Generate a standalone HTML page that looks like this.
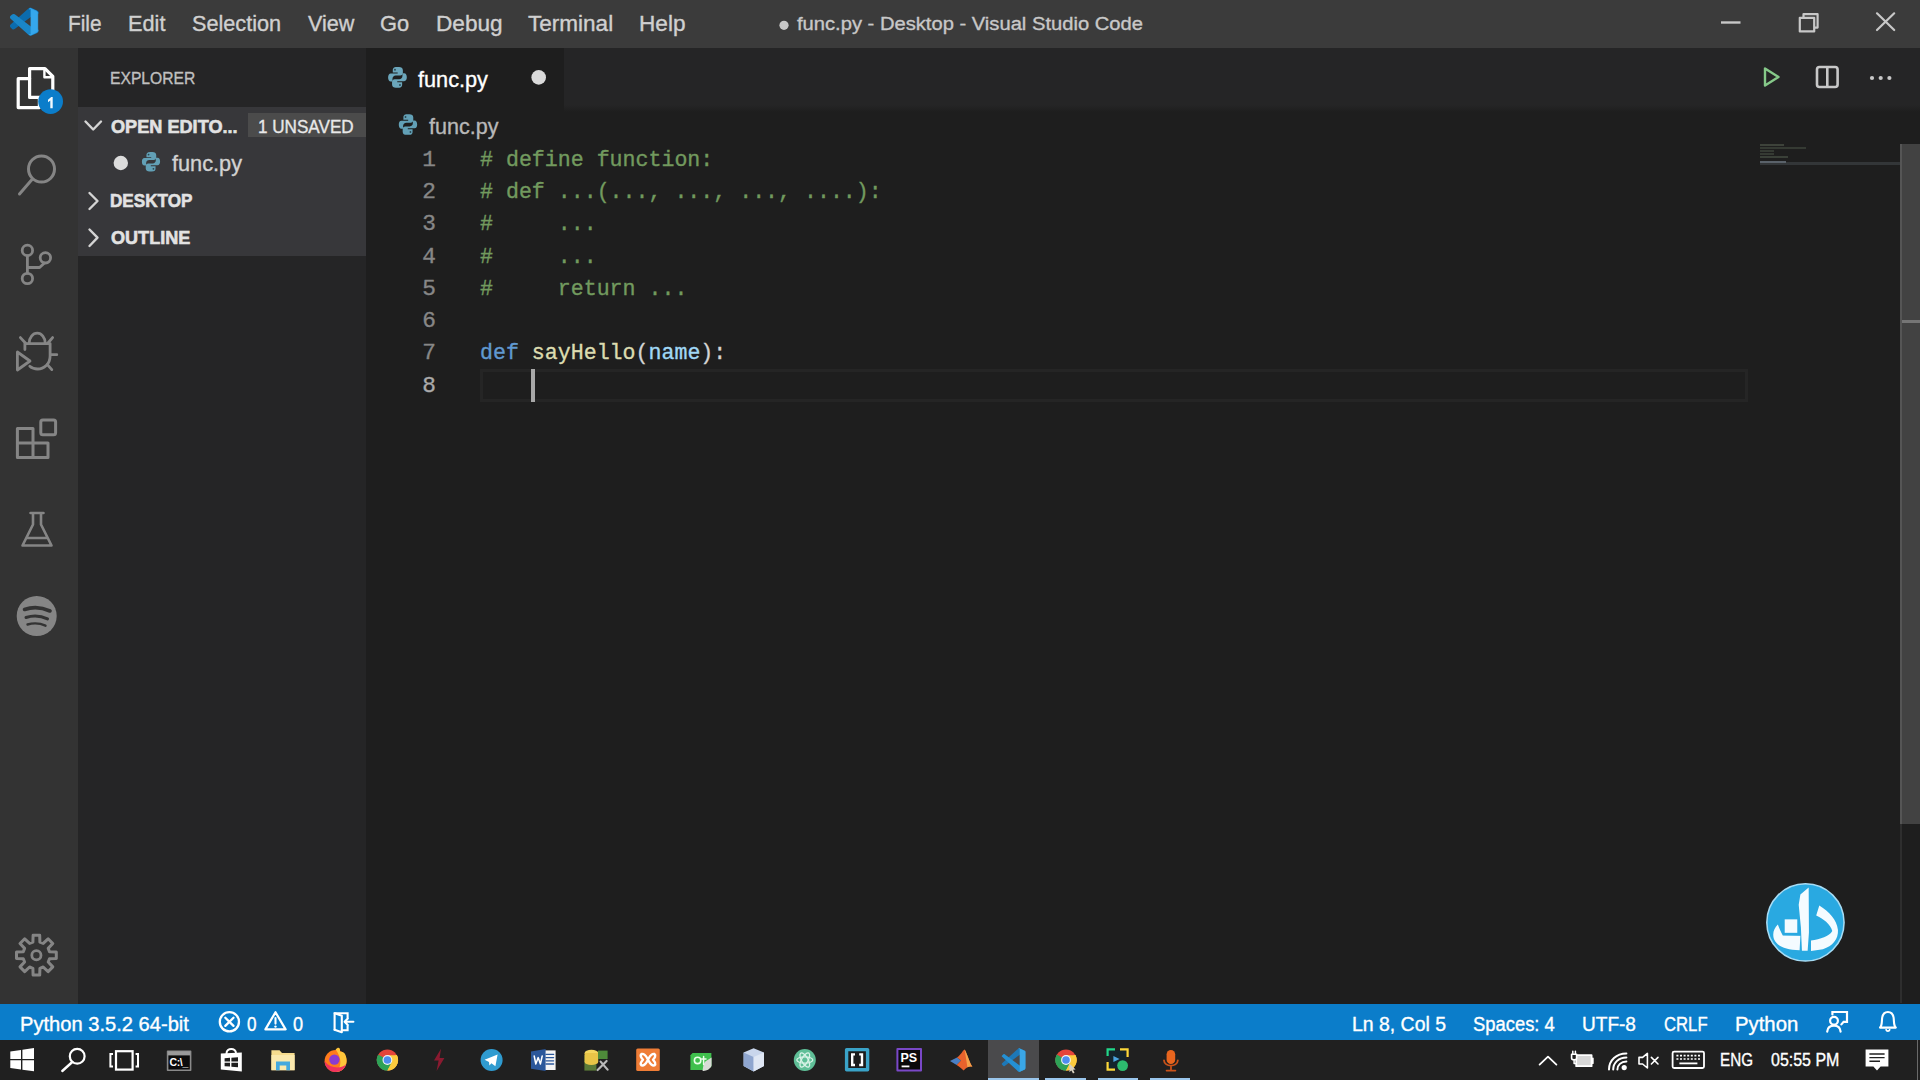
<!DOCTYPE html>
<html><head><meta charset="utf-8">
<style>
*{box-sizing:border-box;margin:0;padding:0}
html,body{width:1920px;height:1080px;overflow:hidden;background:#1e1e1e;font-family:"Liberation Sans",sans-serif;color:#ccc}
.b{position:absolute}
.t{position:absolute;white-space:pre;line-height:1;transform-origin:0 50%;-webkit-text-stroke:0.35px currentColor}
.code{font-family:"Liberation Mono",monospace;font-size:21.6px;left:480px;color:#d4d4d4;transform:none}
.ln{font-family:"Liberation Mono",monospace;font-size:22.8px;left:422.2px;color:#878787;transform:none;margin-top:-0.8px}
.c{color:#729a5e}.k{color:#6099d0}.f{color:#dcdcb0}.v{color:#a0d8f6}
svg{position:absolute;overflow:visible}
</style></head><body>
<div class="b" style="left:0;top:0;width:1920px;height:48px;background:#3b3b3b"></div>
<div class="b" style="left:0;top:48px;width:78px;height:956px;background:#333333"></div>
<div class="b" style="left:78px;top:48px;width:288px;height:956px;background:#252526"></div>
<div class="b" style="left:78px;top:107px;width:288px;height:149px;background:#37373a"></div>
<div class="b" style="left:248px;top:113px;width:118px;height:24px;background:#4b4b4b"></div>
<div class="b" style="left:366px;top:48px;width:1554px;height:57px;background:#252526"></div>
<div class="b" style="left:564px;top:105px;width:1356px;height:7px;background:linear-gradient(#252526,#1e1e1e)"></div>
<div class="b" style="left:366px;top:48px;width:198px;height:64px;background:#1e1e1e"></div>
<div class="b" style="left:366px;top:112px;width:1554px;height:891px;background:#1e1e1e"></div>
<!-- scrollbar -->
<div class="b" style="left:1900px;top:144px;width:20px;height:680px;background:#424242;border-left:2px solid #555"></div>
<div class="b" style="left:1900px;top:824px;width:2px;height:179px;background:#2e2e2e"></div>
<div class="b" style="left:1902px;top:320px;width:18px;height:3px;background:#757575"></div>
<!-- minimap -->
<div class="b" style="left:1760px;top:162px;width:140px;height:3px;background:#333638"></div>
<div class="b" style="left:1760px;top:144px;width:24px;height:2px;background:#3d423a"></div>
<div class="b" style="left:1760px;top:147px;width:46px;height:2px;background:#353a33"></div>
<div class="b" style="left:1760px;top:150px;width:14px;height:2px;background:#353a33"></div>
<div class="b" style="left:1760px;top:153px;width:14px;height:2px;background:#353a33"></div>
<div class="b" style="left:1760px;top:156px;width:28px;height:2px;background:#3a4038"></div>
<div class="b" style="left:1760px;top:161px;width:26px;height:2px;background:#5a626a"></div>
<!-- current line -->
<div class="b" style="left:480px;top:369px;width:1268px;height:33px;border:3px solid #252525"></div>
<div class="b" style="left:531px;top:369px;width:4px;height:33px;background:#a8a8a8"></div>
<!-- status & taskbar -->
<div class="b" style="left:0;top:1003.5px;width:1920px;height:36.5px;background:#0b7dca"></div>
<div class="b" style="left:0;top:1040px;width:1920px;height:40px;background:#202020"></div>

<!-- texts -->
<div class="t" style="left:67.64px;top:13.00px;font-size:21.6px;font-weight:400;color:#d0d0d0;transform:scaleX(0.9649)">File</div>
<div class="t" style="left:127.59px;top:13.00px;font-size:21.6px;font-weight:400;color:#d0d0d0;transform:scaleX(1.0053)">Edit</div>
<div class="t" style="left:192.40px;top:13.00px;font-size:21.6px;font-weight:400;color:#d0d0d0;transform:scaleX(1.0032)">Selection</div>
<div class="t" style="left:307.50px;top:13.00px;font-size:21.6px;font-weight:400;color:#d0d0d0;transform:scaleX(0.9996)">View</div>
<div class="t" style="left:379.59px;top:13.00px;font-size:21.6px;font-weight:400;color:#d0d0d0;transform:scaleX(1.0109)">Go</div>
<div class="t" style="left:435.75px;top:13.00px;font-size:21.6px;font-weight:400;color:#d0d0d0;transform:scaleX(1.0467)">Debug</div>
<div class="t" style="left:528.00px;top:13.00px;font-size:21.6px;font-weight:400;color:#d0d0d0;transform:scaleX(1.0433)">Terminal</div>
<div class="t" style="left:638.95px;top:13.00px;font-size:21.6px;font-weight:400;color:#d0d0d0;transform:scaleX(1.0461)">Help</div>
<div class="t" style="left:796.50px;top:14.40px;font-size:19.2px;font-weight:400;color:#c8c8c8;transform:scaleX(1.0507)">func.py - Desktop - Visual Studio Code</div>
<div class="t" style="left:110.39px;top:70.40px;font-size:17.2px;font-weight:400;color:#c0c0c0;transform:scaleX(0.9111)">EXPLORER</div>
<div class="t" style="left:110.60px;top:116.50px;font-size:19px;font-weight:700;color:#e2e2e2;transform:scaleX(0.9544);-webkit-text-stroke:0.6px currentColor">OPEN EDITO...</div>
<div class="t" style="left:258.46px;top:117.60px;font-size:18.2px;font-weight:400;color:#e8e8e8;transform:scaleX(0.9403)">1 UNSAVED</div>
<div class="t" style="left:171.90px;top:152.60px;font-size:22px;font-weight:400;color:#d2d2d2;transform:scaleX(0.9869)">func.py</div>
<div class="t" style="left:109.70px;top:191.40px;font-size:19px;font-weight:700;color:#e2e2e2;transform:scaleX(0.9006);-webkit-text-stroke:0.6px currentColor">DESKTOP</div>
<div class="t" style="left:110.60px;top:228.30px;font-size:19px;font-weight:700;color:#e2e2e2;transform:scaleX(0.9515);-webkit-text-stroke:0.6px currentColor">OUTLINE</div>
<div class="t" style="left:418.10px;top:69.20px;font-size:22.2px;font-weight:400;color:#ffffff;transform:scaleX(0.9773)">func.py</div>
<div class="t" style="left:429.40px;top:116.10px;font-size:22px;font-weight:400;color:#b8b8b8;transform:scaleX(0.9784)">func.py</div>
<div class="t" style="left:20.46px;top:1014.60px;font-size:19.4px;font-weight:400;color:#ffffff;transform:scaleX(1.0376)">Python 3.5.2 64-bit</div>
<div class="t" style="left:247.00px;top:1014.60px;font-size:19.4px;font-weight:400;color:#ffffff;transform:scaleX(0.8818)">0</div>
<div class="t" style="left:292.70px;top:1014.60px;font-size:19.4px;font-weight:400;color:#ffffff;transform:scaleX(0.9364)">0</div>
<div class="t" style="left:1352.40px;top:1014.60px;font-size:19.4px;font-weight:400;color:#ffffff;transform:scaleX(1.0022)">Ln 8, Col 5</div>
<div class="t" style="left:1473.00px;top:1014.60px;font-size:19.4px;font-weight:400;color:#ffffff;transform:scaleX(0.9485)">Spaces: 4</div>
<div class="t" style="left:1582.42px;top:1014.60px;font-size:19.4px;font-weight:400;color:#ffffff;transform:scaleX(0.9821)">UTF-8</div>
<div class="t" style="left:1663.80px;top:1014.60px;font-size:19.4px;font-weight:400;color:#ffffff;transform:scaleX(0.8604)">CRLF</div>
<div class="t" style="left:1734.55px;top:1014.60px;font-size:19.4px;font-weight:400;color:#ffffff;transform:scaleX(1.0481)">Python</div>
<div class="t" style="left:1719.94px;top:1052.00px;font-size:17.8px;font-weight:400;color:#ffffff;transform:scaleX(0.8556)">ENG</div>
<div class="t" style="left:1770.80px;top:1052.00px;font-size:17.8px;font-weight:400;color:#ffffff;transform:scaleX(0.8991)">05:55 PM</div>
<!-- code -->
<div class="t ln" style="top:150px">1</div>
<div class="t ln" style="top:182px">2</div>
<div class="t ln" style="top:214px">3</div>
<div class="t ln" style="top:247px">4</div>
<div class="t ln" style="top:279px">5</div>
<div class="t ln" style="top:311px">6</div>
<div class="t ln" style="top:343px">7</div>
<div class="t ln" style="top:376px;color:#ababab">8</div>
<div class="t code c" style="top:150px"># define function:</div>
<div class="t code c" style="top:182px"># def ...(..., ..., ..., ....):</div>
<div class="t code c" style="top:214px">#     ...</div>
<div class="t code c" style="top:247px">#     ...</div>
<div class="t code c" style="top:279px">#     return ...</div>
<div class="t code" style="top:343px"><span class="k">def</span> <span class="f">sayHello</span>(<span class="v">name</span>):</div>

<!-- activity bar icons -->
<svg width="78" height="1003" style="left:0;top:0" fill="none" stroke-linejoin="round" stroke-linecap="round">
 <!-- files (active) -->
 <path d="M29.6 78.7 H18.2 V107.6 H39.4 V99" stroke="#fff" stroke-width="3.2"/>
 <path d="M29.6 68.6 H45 L52.8 76.4 V97.4 H29.6 Z" stroke="#fff" stroke-width="3.2"/>
 <path d="M44.4 69 V77.2 H52.4" stroke="#fff" stroke-width="2.4"/>
 <circle cx="50.6" cy="101.6" r="12.4" fill="#0b7dca" stroke="none"/>
 <path d="M48 99.8 L51.2 96.9 H52.7 V108.2 H50.3 V100.4 L48 102.3 Z" fill="#f2faff" stroke="none"/>
 <!-- search -->
 <circle cx="41.5" cy="169" r="13" stroke="#858585" stroke-width="3"/>
 <path d="M32 179.5 L19.5 194" stroke="#858585" stroke-width="3"/>
 <!-- scm -->
 <circle cx="27.4" cy="250.4" r="5.2" stroke="#858585" stroke-width="2.8"/>
 <circle cx="45.4" cy="257.8" r="5.2" stroke="#858585" stroke-width="2.8"/>
 <circle cx="27.4" cy="278.5" r="5.2" stroke="#858585" stroke-width="2.8"/>
 <path d="M27.4 256 V273 M44.2 263.2 L39.6 267.5 H28.2" stroke="#858585" stroke-width="2.8"/>
 <!-- debug -->
 <path d="M17.4 352 V370 L30 361 Z" stroke="#858585" stroke-width="2.8"/>
 <path d="M29.2 343 a8 9.8 0 0 1 16 0" stroke="#858585" stroke-width="2.8"/>
 <path d="M24.9 349.5 V343.6 H50.1 V356 C50.1 364 44 369 37.5 369 C34.4 369 31.6 367.8 29.8 366.2" stroke="#858585" stroke-width="2.8"/>
 <path d="M20.4 337.6 L25.4 343 M52.6 337.6 L48 343 M50.6 354.7 H56.8 M47.4 364.6 L51.8 369.6" stroke="#858585" stroke-width="2.8"/>
 <!-- extensions -->
 <path d="M17.4 428.6 H33 V443 H48 V457.4 H17.4 Z M17.4 443 H33 V457.4" stroke="#858585" stroke-width="3"/>
 <rect x="40.8" y="419.9" width="14.8" height="14.8" rx="2" stroke="#858585" stroke-width="3"/>
 <!-- flask -->
 <path d="M30.5 513 H43.5 M33 513.5 V524.5 L22.5 545.5 H51.5 L41 524.5 V513.5 M26.5 538 H47.5" stroke="#858585" stroke-width="2.6"/>
 <!-- spotify -->
 <circle cx="36.7" cy="616" r="20" fill="#858585" stroke="none"/>
 <path d="M24.5 609.5 q12.5 -4.5 25.5 1.5" stroke="#333" stroke-width="3.6"/>
 <path d="M26 617.5 q11 -3.6 21.5 1.4" stroke="#333" stroke-width="3"/>
 <path d="M27.5 624.5 q9.5 -2.8 18 1.2" stroke="#333" stroke-width="2.4"/>
 <!-- gear -->
 <path d="M33.1 935.3 L39.7 935.3 L39.9 942.1 L43.2 943.4 L48.1 938.8 L52.8 943.5 L48.2 948.4 L49.5 951.7 L56.3 951.9 L56.3 958.5 L49.5 958.7 L48.2 962.0 L52.8 966.9 L48.1 971.6 L43.2 967.0 L39.9 968.3 L39.7 975.1 L33.1 975.1 L32.9 968.3 L29.6 967.0 L24.7 971.6 L20.0 966.9 L24.6 962.0 L23.3 958.7 L16.5 958.5 L16.5 951.9 L23.3 951.7 L24.6 948.4 L20.0 943.5 L24.7 938.8 L29.6 943.4 L32.9 942.1Z" stroke="#858585" stroke-width="3"/>
 <circle cx="36.4" cy="955.2" r="4.6" stroke="#858585" stroke-width="2.8"/>
</svg>

<!-- misc icons -->
<svg width="1920" height="1080" style="left:0;top:0" fill="none" stroke-linejoin="round" stroke-linecap="round">
 <!-- vscode logo -->
 <g transform="translate(10.9,8.5) scale(0.268,0.264)" stroke-linejoin="round">
  <path d="M96.46 10.8L75.86 0.88C73.47 -0.27 70.62 0.21 68.75 2.08L1.3 63.58C-0.52 65.24 -0.51 68.09 1.3 69.75L6.81 74.75C8.3 76.1 10.53 76.2 12.13 74.99L93.36 13.37C96.09 11.3 100 13.25 100 16.67V16.43C100 14.03 98.62 11.84 96.46 10.8Z" fill="#0c6cae" stroke="#0c6cae" stroke-width="7"/>
  <path d="M96.46 89.2L75.86 99.12C73.47 100.27 70.62 99.79 68.75 97.92L1.3 36.42C-0.52 34.76 -0.51 31.91 1.3 30.25L6.81 25.25C8.3 23.9 10.53 23.8 12.13 25.01L93.36 86.63C96.09 88.7 100 86.75 100 83.33V83.57C100 85.97 98.62 88.16 96.46 89.2Z" fill="#1a86c8" stroke="#1a86c8" stroke-width="7"/>
  <path d="M75.86 99.13C73.47 100.27 70.62 99.79 68.75 97.92C71.06 100.22 75 98.59 75 95.33V4.67C75 1.41 71.06 -0.22 68.75 2.08C70.62 0.21 73.47 -0.27 75.86 0.87L96.46 10.78C98.62 11.82 100 14.01 100 16.41V83.59C100 85.99 98.62 88.18 96.46 89.22L75.86 99.13Z" fill="#35a7ec" stroke="#35a7ec" stroke-width="3"/>
 </g>
 <!-- title bullet -->
 <circle cx="784" cy="25.3" r="4.6" fill="#c8c8c8"/>
 <!-- window controls -->
 <path d="M1721 22.5 H1740.5" stroke="#c8c8c8" stroke-width="2.4" stroke-linecap="butt"/>
 <rect x="1799.8" y="17.8" width="14.4" height="13.6" stroke="#c8c8c8" stroke-width="2.2"/>
 <path d="M1803.5 17 V14.2 H1817.6 V27.6 H1815" stroke="#c8c8c8" stroke-width="2.2"/>
 <path d="M1877 13.3 L1894.2 30 M1894.2 13.3 L1877 30" stroke="#c8c8c8" stroke-width="2.2"/>
 <!-- editor actions -->
 <path d="M1765 68.5 V85.5 L1778.5 77 Z" stroke="#86c989" stroke-width="2.4"/>
 <rect x="1817" y="67" width="20.6" height="20" rx="2.5" stroke="#c8c8c8" stroke-width="2.6"/>
 <path d="M1827.3 67.5 V86.5" stroke="#c8c8c8" stroke-width="2.6"/>
 <circle cx="1872" cy="78" r="2.1" fill="#c8c8c8"/><circle cx="1880.7" cy="78" r="2.1" fill="#c8c8c8"/><circle cx="1889.4" cy="78" r="2.1" fill="#c8c8c8"/>
 <!-- tab python + dot -->
 <g transform="translate(388.1,66.9) scale(1.04,1.09)" fill="#6ba6bb"><path d="M9.2 0 h-1 c-3 0 -3.7 1.4 -3.7 3 v2.2 h4.7 v0.9 h-6.6 c-1.8 0 -2.6 1.6 -2.6 3.6 s0.8 3.7 2.6 3.7 h1.6 v-2.4 c0 -1.9 1.4 -3.1 3.1 -3.1 h4.4 c1.5 0 2.5 -1.1 2.5 -2.6 v-2.3 c0 -2 -1.6 -3 -3.7 -3 z"/><path d="M9.2 0 h-1 c-3 0 -3.7 1.4 -3.7 3 v2.2 h4.7 v0.9 h-6.6 c-1.8 0 -2.6 1.6 -2.6 3.6 s0.8 3.7 2.6 3.7 h1.6 v-2.4 c0 -1.9 1.4 -3.1 3.1 -3.1 h4.4 c1.5 0 2.5 -1.1 2.5 -2.6 v-2.3 c0 -2 -1.6 -3 -3.7 -3 z" transform="rotate(180 9 9.6)"/><circle cx="6.6" cy="2.6" r="0.9" fill="#2a4650"/><circle cx="11.4" cy="16.6" r="0.9" fill="#2a4650"/></g>
 <circle cx="538.7" cy="77.4" r="7.3" fill="#dadada"/>
 <!-- breadcrumb python -->
 <g transform="translate(398.8,114.3) scale(1.02,1.07)" fill="#62a0b6"><path d="M9.2 0 h-1 c-3 0 -3.7 1.4 -3.7 3 v2.2 h4.7 v0.9 h-6.6 c-1.8 0 -2.6 1.6 -2.6 3.6 s0.8 3.7 2.6 3.7 h1.6 v-2.4 c0 -1.9 1.4 -3.1 3.1 -3.1 h4.4 c1.5 0 2.5 -1.1 2.5 -2.6 v-2.3 c0 -2 -1.6 -3 -3.7 -3 z"/><path d="M9.2 0 h-1 c-3 0 -3.7 1.4 -3.7 3 v2.2 h4.7 v0.9 h-6.6 c-1.8 0 -2.6 1.6 -2.6 3.6 s0.8 3.7 2.6 3.7 h1.6 v-2.4 c0 -1.9 1.4 -3.1 3.1 -3.1 h4.4 c1.5 0 2.5 -1.1 2.5 -2.6 v-2.3 c0 -2 -1.6 -3 -3.7 -3 z" transform="rotate(180 9 9.6)"/><circle cx="6.6" cy="2.6" r="0.9" fill="#2a4650"/><circle cx="11.4" cy="16.6" r="0.9" fill="#2a4650"/></g>
 <!-- sidebar row -->
 <circle cx="120.8" cy="163" r="7.2" fill="#dcdcdc"/>
 <g transform="translate(141.9,151.9) scale(1.01,1.02)" fill="#62a0b6"><path d="M9.2 0 h-1 c-3 0 -3.7 1.4 -3.7 3 v2.2 h4.7 v0.9 h-6.6 c-1.8 0 -2.6 1.6 -2.6 3.6 s0.8 3.7 2.6 3.7 h1.6 v-2.4 c0 -1.9 1.4 -3.1 3.1 -3.1 h4.4 c1.5 0 2.5 -1.1 2.5 -2.6 v-2.3 c0 -2 -1.6 -3 -3.7 -3 z"/><path d="M9.2 0 h-1 c-3 0 -3.7 1.4 -3.7 3 v2.2 h4.7 v0.9 h-6.6 c-1.8 0 -2.6 1.6 -2.6 3.6 s0.8 3.7 2.6 3.7 h1.6 v-2.4 c0 -1.9 1.4 -3.1 3.1 -3.1 h4.4 c1.5 0 2.5 -1.1 2.5 -2.6 v-2.3 c0 -2 -1.6 -3 -3.7 -3 z" transform="rotate(180 9 9.6)"/><circle cx="6.6" cy="2.6" r="0.9" fill="#2a4650"/><circle cx="11.4" cy="16.6" r="0.9" fill="#2a4650"/></g>
 <!-- chevrons -->
 <path d="M85.5 121.5 L93.2 129.5 L101 121.5" stroke="#d4d4d4" stroke-width="2.4"/>
 <path d="M89.5 193 L97.5 201 L89.5 209" stroke="#d4d4d4" stroke-width="2.4"/>
 <path d="M89.5 229.5 L97.5 237.7 L89.5 246" stroke="#d4d4d4" stroke-width="2.4"/>
 <!-- status: error / warning / door -->
 <circle cx="229.4" cy="1021.8" r="9.6" stroke="#fff" stroke-width="2.3"/>
 <path d="M225.3 1017.7 L233.5 1025.9 M233.5 1017.7 L225.3 1025.9" stroke="#fff" stroke-width="2.3"/>
 <path d="M275.5 1012.2 L285.6 1029.4 H265.4 Z" stroke="#fff" stroke-width="2.2"/>
 <path d="M275.5 1018 V1023.6" stroke="#fff" stroke-width="2.1"/><circle cx="275.5" cy="1026.6" r="1.2" fill="#fff"/>
 <path d="M347.6 1017.6 V1013.2 H334.6 V1029.8 M342 1030.2 H347.6 V1026" stroke="#fff" stroke-width="2.1" stroke-linejoin="miter"/>
 <path d="M334.8 1013.3 L341.8 1015.8 V1032.2 L334.6 1029.8" stroke="#fff" stroke-width="2.1"/>
 <path d="M353.4 1021.8 H345 M347.8 1018.6 L344.6 1021.8 L347.8 1025" stroke="#fff" stroke-width="2.1"/>
 <!-- status: feedback / bell -->
 <path d="M1832.4 1014.5 V1012 H1847 V1021.8 H1843.6 L1841.4 1024.4" stroke="#fff" stroke-width="2.2" stroke-linejoin="miter"/>
 <circle cx="1834" cy="1020.7" r="3.9" stroke="#fff" stroke-width="2.2"/>
 <path d="M1827.2 1031.6 C1827.6 1027.4 1830 1025.6 1834 1025.6 C1838 1025.6 1840.2 1027.4 1840.6 1031.6" stroke="#fff" stroke-width="2.2"/>
 <path d="M1880 1027.6 C1882.4 1025.4 1881.6 1021 1882.2 1017.6 C1882.9 1013.6 1885.2 1012 1887.9 1012 C1890.6 1012 1892.9 1013.6 1893.6 1017.6 C1894.2 1021 1893.4 1025.4 1895.8 1027.6 Z" stroke="#fff" stroke-width="2.1"/>
 <path d="M1886.1 1029.8 a1.9 1.9 0 0 0 3.6 0" stroke="#fff" stroke-width="1.8"/>
</svg>

<!-- taskbar -->
<div class="b" style="left:988px;top:1040px;width:51px;height:40px;background:#4a4a4c"></div>
<div class="b" style="left:988px;top:1078px;width:51px;height:2px;background:#9ac6ec"></div>
<div class="b" style="left:1045px;top:1078px;width:41px;height:2px;background:#9ac6ec"></div>
<div class="b" style="left:1098px;top:1078px;width:40px;height:2px;background:#9ac6ec"></div>
<div class="b" style="left:1150px;top:1078px;width:40px;height:2px;background:#9ac6ec"></div>
<div class="b" style="left:1917px;top:1040px;width:1px;height:40px;background:#6a6a6a"></div>
<svg width="1920" height="1080" style="left:0;top:0" fill="none" stroke-linejoin="round" stroke-linecap="round">
 <!-- windows start -->
 <path d="M10.3 1051.4 L21 1049.9 V1059 H10.3 Z M22.4 1049.7 L34 1048.1 V1059 H22.4 Z M10.3 1060.3 H21 V1069.5 L10.3 1068 Z M22.4 1060.3 H34 V1071.3 L22.4 1069.7 Z" fill="#fff"/>
 <!-- search -->
 <circle cx="77.2" cy="1056.3" r="7.4" stroke="#fff" stroke-width="2.2"/>
 <path d="M72.3 1062 L62.3 1071" stroke="#fff" stroke-width="2.4"/>
 <!-- task view -->
 <rect x="116" y="1051.2" width="16.6" height="18.4" stroke="#fff" stroke-width="2.2" stroke-linejoin="miter"/>
 <path d="M113 1054 H110.4 V1066.4 H113 M135.6 1054 H138 V1066.4 H135.6" stroke="#fff" stroke-width="2" stroke-linecap="butt" stroke-linejoin="miter"/>
 <!-- cmd -->
 <rect x="167.6" y="1051.2" width="23" height="19" fill="#0c0c0c" stroke="#8a8a8a" stroke-width="1.6"/>
 <rect x="168" y="1051.4" width="22.2" height="4" fill="#9a9a9a"/>
 <!-- store -->
 <path d="M226.5 1053.5 C226.5 1047.5 236 1047.5 236 1053.5" stroke="#fff" stroke-width="2"/>
 <path d="M220.8 1053.6 L241.8 1052.6 V1071.6 L220.8 1069.6 Z" fill="#fff"/>
 <path d="M224.6 1058.2 L230 1057.8 V1061.4 H224.6 Z M231.4 1057.7 L238 1057.2 V1061.4 H231.4 Z M224.6 1062.7 H230 V1066.6 L224.6 1066.2 Z M231.4 1062.7 H238 V1067.3 L231.4 1066.8 Z" fill="#202020"/>
 <!-- explorer folder -->
 <path d="M271.4 1050.2 H279.5 L282 1053 H294.6 V1070.2 H271.4 Z" fill="#f6dc8e"/>
 <path d="M271.4 1055 H294.6 V1070.2 H271.4 Z" fill="#fbe9ad"/>
 <path d="M276 1070.2 V1061.6 H290 V1070.2 H286.3 V1065.4 H279.7 V1070.2 Z" fill="#45a9de"/>
 <!-- firefox -->
 <circle cx="335.6" cy="1061" r="11" fill="#ff7b1c"/>
 <path d="M335.6 1049.6 C339 1045.8 340.6 1049 340 1052 C344 1050.6 346.8 1055.4 346.6 1061 C346.4 1067.5 341.6 1072 335.6 1072 C342 1068 342 1058 335.6 1049.6 Z" fill="#ffc53a"/>
 <path d="M324.6 1061 C324.6 1067 329.5 1072 335.6 1072 C341 1072 345 1068.6 346.3 1064 C342 1069 330 1069 324.6 1061 Z" fill="#f0325e"/>
 <circle cx="334.4" cy="1059.6" r="5.2" fill="#8a3bd0"/>
 <!-- chrome 1 -->
 <g id="chr">
 <circle cx="387.4" cy="1060" r="10.6" fill="#e4453a"/>
 <path d="M387.4 1060 L378.2 1054.7 A10.6 10.6 0 0 0 382.1 1069.2 Z M387.4 1060 L382.1 1069.2 A10.6 10.6 0 0 0 387.4 1070.6 Z" fill="#2ea257"/>
 <path d="M387.4 1060 L387.4 1070.6 A10.6 10.6 0 0 0 396.6 1054.7 Z" fill="#fccb3d"/>
 <path d="M387.4 1060 L378.2 1054.7 A10.6 10.6 0 0 0 387.4 1070.6 L392 1062.6 Z" fill="#2ea257"/>
 <path d="M387.4 1055.3 H397 A10.6 10.6 0 0 1 387.4 1070.6 L391.6 1062.4 Z" fill="#fccb3d"/>
 <circle cx="387.4" cy="1060" r="4.9" fill="#f3f3f3"/>
 <circle cx="387.4" cy="1060" r="3.8" fill="#4d8df0"/>
 </g>
 <!-- red bolt -->
 <path d="M441 1048.8 L434 1060.6 H438.6 L436.6 1071 L444.4 1058 H439.6 Z" fill="#8a1a30"/>
 <!-- telegram -->
 <circle cx="491.6" cy="1060" r="11" fill="#2f9bd0"/>
 <path d="M484.6 1059.8 L497.6 1054.4 L495.4 1066.2 L491.4 1063.2 L489.4 1065.4 L489 1062 Z" fill="#fff"/>
 <!-- word -->
 <rect x="540" y="1050.4" width="15.6" height="19.6" fill="#f4f4f4"/>
 <path d="M546 1054.4 H553.6 M546 1057.6 H553.6 M546 1060.8 H553.6 M546 1064 H553.6" stroke="#2b579a" stroke-width="1.3"/>
 <path d="M531 1051.4 L545.6 1049 V1071 L531 1068.8 Z" fill="#2b579a"/>
 <path d="M534.2 1056 L535.8 1064 L538.2 1057.6 L540.4 1064 L542.2 1056" stroke="#fff" stroke-width="1.5"/>
 <!-- db tool -->
 <rect x="584.4" y="1055" width="12" height="15.6" fill="#5a7a38"/>
 <ellipse cx="591.4" cy="1053" rx="6.8" ry="3.2" fill="#f3d65e"/>
 <rect x="584.6" y="1053" width="13.6" height="9" fill="#e8c547"/>
 <ellipse cx="591.4" cy="1062" rx="6.8" ry="3" fill="#e8c547"/>
 <rect x="598" y="1050.6" width="9.6" height="8.4" fill="#4e8a3a"/>
 <path d="M597.6 1070 L606.6 1061 M600.6 1061.6 L607.6 1069.6" stroke="#b9b9b9" stroke-width="2.2"/>
 <!-- xampp -->
 <rect x="636.2" y="1048.4" width="23.6" height="22.6" rx="1.5" fill="#ef7d36"/>
 <path d="M641.6 1054 C645 1053.2 646.4 1057 648 1059.6 C649.6 1057 651 1053.2 654.4 1054 C656.4 1055.4 654.6 1058 653 1059.7 C654.6 1061.4 656.4 1064 654.4 1065.4 C651 1066.2 649.6 1062.4 648 1059.8 C646.4 1062.4 645 1066.2 641.6 1065.4 C639.6 1064 641.4 1061.4 643 1059.7 C641.4 1058 639.6 1055.4 641.6 1054 Z" stroke="#fff" stroke-width="2.4" fill="none"/>
 <!-- qt -->
 <path d="M692.6 1053 H711.4 V1066.4 L707.4 1070 H690.4 V1055.2 Z" fill="#3fc04d"/>
 <path d="M706 1061 L711.6 1057.4 V1065.6 C710.4 1069 706.4 1071.4 702.6 1071 C703 1067.4 703.4 1063 706 1061 Z" fill="#d8dcd6"/>
 <circle cx="697.6" cy="1060.4" r="3.2" stroke="#eaffea" stroke-width="1.6"/>
 <path d="M703.6 1056.4 V1064.4 M701.6 1059 H706" stroke="#eaffea" stroke-width="1.5"/>
 <!-- cube -->
 <path d="M753.6 1048.2 L764 1052.6 V1066 L753.6 1071.4 L743.6 1066 V1052.6 Z" fill="#c9d6ec"/>
 <path d="M743.6 1052.6 L753.6 1057 V1071.4 L743.6 1066 Z" fill="#8fa6cf"/>
 <path d="M753.6 1057 L764 1052.6 V1066 L753.6 1071.4 Z" fill="#dfe7f4"/>
 <!-- atom-ish -->
 <circle cx="804.8" cy="1060" r="11" fill="#5fbf97"/>
 <ellipse cx="804.8" cy="1060" rx="8" ry="3.2" stroke="#d8f3e7" stroke-width="1.3"/>
 <ellipse cx="804.8" cy="1060" rx="8" ry="3.2" stroke="#d8f3e7" stroke-width="1.3" transform="rotate(60 804.8 1060)"/>
 <ellipse cx="804.8" cy="1060" rx="8" ry="3.2" stroke="#d8f3e7" stroke-width="1.3" transform="rotate(120 804.8 1060)"/>
 <!-- brackets -->
 <rect x="846.6" y="1049.6" width="21" height="20.2" fill="#1b1b1b" stroke="#3aa3c8" stroke-width="3.4"/>
 <path d="M855 1054.4 H852.2 V1065 H855 M859.2 1054.4 H862 V1065 H859.2" stroke="#fff" stroke-width="2.4" stroke-linecap="butt" stroke-linejoin="miter"/>
 <!-- phpstorm -->
 <rect x="897.4" y="1049" width="23.6" height="21.6" fill="#0a0a0a" stroke="#7a48c8" stroke-width="2"/>
 <path d="M901.6 1066.4 H909.4" stroke="#fff" stroke-width="1.8" stroke-linecap="butt"/>
 <!-- matlab -->
 <path d="M950 1061 L957 1057.4 L961 1060.6 L956.6 1065 Z" fill="#4a7fc4"/>
 <path d="M957 1057.4 C961 1054.6 962.6 1050.6 964.6 1049.4 C967 1053 969.6 1062.6 972.4 1066.8 C969 1066 966.6 1067.4 963.6 1070.6 C961 1068 958.6 1066 956.6 1065 L961 1060.6 Z" fill="#e8622c"/>
 <path d="M964.6 1049.4 C967 1053 969.6 1062.6 972.4 1066.8 C970.4 1066.4 968.8 1066.6 967.4 1067.2 C966.6 1062 965.6 1055 964.6 1049.4 Z" fill="#f4a24a"/>
 <!-- vscode (active) -->
 <g transform="translate(1001.8,1048.2) scale(0.238,0.238)">
  <path d="M96.46 10.8L75.86 0.88C73.47 -0.27 70.62 0.21 68.75 2.08L1.3 63.58C-0.52 65.24 -0.51 68.09 1.3 69.75L6.81 74.75C8.3 76.1 10.53 76.2 12.13 74.99L93.36 13.37C96.09 11.3 100 13.25 100 16.67V16.43C100 14.03 98.62 11.84 96.46 10.8Z" fill="#1d78b8"/>
  <path d="M96.46 89.2L75.86 99.12C73.47 100.27 70.62 99.79 68.75 97.92L1.3 36.42C-0.52 34.76 -0.51 31.91 1.3 30.25L6.81 25.25C8.3 23.9 10.53 23.8 12.13 25.01L93.36 86.63C96.09 88.7 100 86.75 100 83.33V83.57C100 85.97 98.62 88.16 96.46 89.2Z" fill="#2490d4"/>
  <path d="M75.86 99.13C73.47 100.27 70.62 99.79 68.75 97.92C71.06 100.22 75 98.59 75 95.33V4.67C75 1.41 71.06 -0.22 68.75 2.08C70.62 0.21 73.47 -0.27 75.86 0.87L96.46 10.78C98.62 11.82 100 14.01 100 16.41V83.59C100 85.99 98.62 88.18 96.46 89.22L75.86 99.13Z" fill="#3aa6e6"/>
 </g>
 <!-- chrome 2 -->
 <use href="#chr" transform="translate(678.6,0)"/>
 <path d="M1069.4 1063.6 L1069.4 1072 L1071.4 1070.4 L1073 1073.4 L1074.6 1072.6 L1073 1069.8 L1075.6 1069.6 Z" fill="#d8d0c0"/>
 <!-- pycharm-like -->
 <rect x="1109" y="1050.4" width="17" height="17.6" fill="#13242c"/>
 <path d="M1107.6 1056 V1049.4 H1115" stroke="#21d789" stroke-width="2.2" stroke-linecap="butt" stroke-linejoin="miter"/>
 <path d="M1120 1049.4 H1127.6 V1057" stroke="#fcd83a" stroke-width="2.2" stroke-linecap="butt" stroke-linejoin="miter"/>
 <path d="M1107.6 1062 V1069.6 H1115" stroke="#fcd83a" stroke-width="2.2" stroke-linecap="butt" stroke-linejoin="miter"/>
 <path d="M1113.4 1056 L1119.6 1059 L1113.4 1062 Z" fill="#4aa3e0"/>
 <circle cx="1122.6" cy="1065.6" r="5.4" fill="#2dbb6e"/>
 <!-- mic -->
 <rect x="1166.6" y="1050" width="8.6" height="14" rx="4.3" fill="#e8651e"/>
 <path d="M1164 1060.4 C1164.4 1067.4 1177.4 1067.4 1177.8 1060.4 M1171 1066 V1070.4 M1166.6 1070.6 H1175.4" stroke="#c9521a" stroke-width="1.8"/>
 <!-- tray -->
 <path d="M1539.6 1064.6 L1548 1056.6 L1556.4 1064.6" stroke="#fff" stroke-width="1.8"/>
 <rect x="1576.2" y="1055.2" width="15.4" height="11" fill="#d6d6d6" stroke="#fff" stroke-width="1.8"/>
 <path d="M1592.8 1058.4 V1063.2" stroke="#fff" stroke-width="1.8"/>
 <path d="M1571.6 1054.2 H1576.6 V1058.2 C1576.6 1060.2 1571.6 1060.2 1571.6 1058.2 Z" fill="#202020" stroke="#fff" stroke-width="1.6"/><path d="M1572.8 1051.2 V1054 M1575.4 1051.2 V1054 M1574.1 1060 V1063.4 H1575.6" stroke="#fff" stroke-width="1.5" fill="none"/>
 <path d="M1609 1069.6 C1609 1060.4 1616.4 1053.4 1626.4 1053.4" stroke="#fff" stroke-width="2"/>
 <path d="M1613.2 1069.6 C1613.2 1062.6 1619 1057.4 1626.4 1057.4" stroke="#fff" stroke-width="2"/>
 <path d="M1617.4 1069.6 C1617.4 1065 1621 1061.6 1626.4 1061.6" stroke="#fff" stroke-width="2"/>
 <circle cx="1624.2" cy="1067.6" r="2.6" fill="#fff"/>
 <path d="M1639 1057.4 H1642.6 L1647.4 1053.4 V1068 L1642.6 1064 H1639 Z" stroke="#fff" stroke-width="1.6"/>
 <path d="M1651.4 1057.4 L1658 1064 M1658 1057.4 L1651.4 1064" stroke="#fff" stroke-width="1.6"/>
 <rect x="1672.6" y="1051.6" width="31.4" height="16.4" rx="1.5" stroke="#fff" stroke-width="1.8"/>
 <path d="M1676.4 1055.6 H1700.4 M1676.4 1059 H1700.4" stroke="#fff" stroke-width="1.7" stroke-dasharray="2 1.6" stroke-linecap="butt"/>
 <path d="M1679.4 1063.4 H1697.4" stroke="#fff" stroke-width="1.8" stroke-linecap="butt"/>
 <!-- notification -->
 <path d="M1865.6 1049.4 H1888.4 V1066.6 H1880.6 L1877 1070.6 L1873.4 1066.6 H1865.6 Z" fill="#fff"/>
 <path d="M1869.4 1054 H1884.6 M1869.4 1057.6 H1884.6 M1869.4 1061.2 H1880" stroke="#202020" stroke-width="1.4" stroke-linecap="butt"/>
</svg>
<div class="t" style="left:169.6px;top:1057.2px;font-size:10.5px;font-weight:700;color:#fff;transform:none;letter-spacing:-0.4px;-webkit-text-stroke:0">C:\_</div>
<div class="t" style="left:900.6px;top:1052.4px;font-size:12.5px;font-weight:700;color:#fff;transform:none;letter-spacing:-0.2px;-webkit-text-stroke:0">PS</div>

<!-- watermark logo -->
<svg width="1920" height="1080" style="left:0;top:0">
 <g transform="translate(1740,860) scale(0.12958)">
  <circle cx="505" cy="482" r="298" fill="#29a9e1" stroke="#a6dcf5" stroke-width="12"/>
  <!-- alef -->
  <path d="M530 212 L466 266 L453 345 L470 520 L478 700 L522 700 L532 560 Z" fill="#f4fbff"/>
  <!-- dal (right) -->
  <path d="M612 352 C690 400 745 460 756 540 C760 610 715 665 640 688 L548 702 L548 622 C620 610 690 590 712 548 C700 495 640 452 588 428 Z" fill="#f4fbff"/>
  <!-- box -->
  <path d="M345 458 H442 V562 H345 Z" fill="#f4fbff"/>
  <!-- boat -->
  <path d="M292 498 C262 530 248 565 262 610 C285 665 345 690 460 697 L466 585 L330 580 C318 560 305 530 292 498 Z" fill="#f4fbff"/>
  <path d="M330 566 H466 V582 H330 Z" fill="#29a9e1"/>
 </g>
</svg>

</body></html>
